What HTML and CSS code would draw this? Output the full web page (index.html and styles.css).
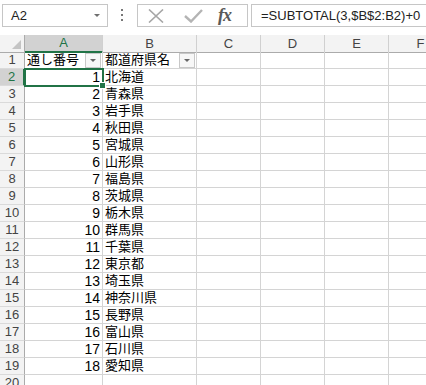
FILE: index.html
```html
<!DOCTYPE html>
<html lang="ja">
<head>
    <meta charset="UTF-8">
    <title>Sheet1</title>
    <link rel="stylesheet" href="styles.css">
</head>
<body>
    <div class="formula-bar">
        <div class="name-box"><span>A2</span><span class="nb-arrow"></span></div>
        <div class="fb-dots">
            <svg width="3" height="13" viewBox="0 0 3 13"><rect x="0" y="0" width="2" height="2" fill="#777"/><rect x="0" y="5" width="2" height="2" fill="#777"/><rect x="0" y="10" width="2" height="2" fill="#777"/></svg>
        </div>
        <div class="fb-buttons">
            <svg class="fb-cancel" width="16" height="14" viewBox="0 0 16 14"><path d="M1 0.5 L15 13.5 M15 0.5 L1 13.5" stroke="#a6a6a6" stroke-width="1.6" fill="none"/></svg>
            <svg class="fb-enter" width="19" height="14" viewBox="0 0 19 14"><path d="M1 7 L7 12.5 L18 1" stroke="#b4b4b4" stroke-width="2.4" fill="none"/></svg>
            <span class="fx">fx</span>
        </div>
        <div class="fb-input">=SUBTOTAL(3,$B$2:B2)+0</div>
    </div>

    <div class="sheet">
        <div class="row head">
            <div class="corner"><span class="corner-tri"></span></div>
            <div class="col-h sel">A</div>
            <div class="col-h">B</div>
            <div class="col-h">C</div>
            <div class="col-h">D</div>
            <div class="col-h">E</div>
            <div class="col-h">F</div>
        </div>
        <div class="row">
            <div class="row-h">1</div>
            <div class="cell text">通し番号<span class="filter-btn"></span></div>
            <div class="cell text">都道府県名<span class="filter-btn"></span></div>
            <div class="cell"></div><div class="cell"></div><div class="cell"></div><div class="cell"></div>
        </div>
        <div class="row">
            <div class="row-h sel">2</div>
            <div class="cell num">1</div><div class="cell text">北海道</div>
            <div class="cell"></div><div class="cell"></div><div class="cell"></div><div class="cell"></div>
        </div>
        <div class="row">
            <div class="row-h">3</div>
            <div class="cell num">2</div><div class="cell text">青森県</div>
            <div class="cell"></div><div class="cell"></div><div class="cell"></div><div class="cell"></div>
        </div>
        <div class="row">
            <div class="row-h">4</div>
            <div class="cell num">3</div><div class="cell text">岩手県</div>
            <div class="cell"></div><div class="cell"></div><div class="cell"></div><div class="cell"></div>
        </div>
        <div class="row">
            <div class="row-h">5</div>
            <div class="cell num">4</div><div class="cell text">秋田県</div>
            <div class="cell"></div><div class="cell"></div><div class="cell"></div><div class="cell"></div>
        </div>
        <div class="row">
            <div class="row-h">6</div>
            <div class="cell num">5</div><div class="cell text">宮城県</div>
            <div class="cell"></div><div class="cell"></div><div class="cell"></div><div class="cell"></div>
        </div>
        <div class="row">
            <div class="row-h">7</div>
            <div class="cell num">6</div><div class="cell text">山形県</div>
            <div class="cell"></div><div class="cell"></div><div class="cell"></div><div class="cell"></div>
        </div>
        <div class="row">
            <div class="row-h">8</div>
            <div class="cell num">7</div><div class="cell text">福島県</div>
            <div class="cell"></div><div class="cell"></div><div class="cell"></div><div class="cell"></div>
        </div>
        <div class="row">
            <div class="row-h">9</div>
            <div class="cell num">8</div><div class="cell text">茨城県</div>
            <div class="cell"></div><div class="cell"></div><div class="cell"></div><div class="cell"></div>
        </div>
        <div class="row">
            <div class="row-h">10</div>
            <div class="cell num">9</div><div class="cell text">栃木県</div>
            <div class="cell"></div><div class="cell"></div><div class="cell"></div><div class="cell"></div>
        </div>
        <div class="row">
            <div class="row-h">11</div>
            <div class="cell num">10</div><div class="cell text">群馬県</div>
            <div class="cell"></div><div class="cell"></div><div class="cell"></div><div class="cell"></div>
        </div>
        <div class="row">
            <div class="row-h">12</div>
            <div class="cell num">11</div><div class="cell text">千葉県</div>
            <div class="cell"></div><div class="cell"></div><div class="cell"></div><div class="cell"></div>
        </div>
        <div class="row">
            <div class="row-h">13</div>
            <div class="cell num">12</div><div class="cell text">東京都</div>
            <div class="cell"></div><div class="cell"></div><div class="cell"></div><div class="cell"></div>
        </div>
        <div class="row">
            <div class="row-h">14</div>
            <div class="cell num">13</div><div class="cell text">埼玉県</div>
            <div class="cell"></div><div class="cell"></div><div class="cell"></div><div class="cell"></div>
        </div>
        <div class="row">
            <div class="row-h">15</div>
            <div class="cell num">14</div><div class="cell text">神奈川県</div>
            <div class="cell"></div><div class="cell"></div><div class="cell"></div><div class="cell"></div>
        </div>
        <div class="row">
            <div class="row-h">16</div>
            <div class="cell num">15</div><div class="cell text">長野県</div>
            <div class="cell"></div><div class="cell"></div><div class="cell"></div><div class="cell"></div>
        </div>
        <div class="row">
            <div class="row-h">17</div>
            <div class="cell num">16</div><div class="cell text">富山県</div>
            <div class="cell"></div><div class="cell"></div><div class="cell"></div><div class="cell"></div>
        </div>
        <div class="row">
            <div class="row-h">18</div>
            <div class="cell num">17</div><div class="cell text">石川県</div>
            <div class="cell"></div><div class="cell"></div><div class="cell"></div><div class="cell"></div>
        </div>
        <div class="row">
            <div class="row-h">19</div>
            <div class="cell num">18</div><div class="cell text">愛知県</div>
            <div class="cell"></div><div class="cell"></div><div class="cell"></div><div class="cell"></div>
        </div>
        <div class="row">
            <div class="row-h">20</div>
            <div class="cell"></div><div class="cell"></div>
            <div class="cell"></div><div class="cell"></div><div class="cell"></div><div class="cell"></div>
        </div>

        <div class="selection"><span class="fill-handle"></span></div>
    </div>
</body>
</html>
```

FILE: styles.css
```css
body {
    margin: 0;
    width: 426px;
    height: 385px;
    overflow: hidden;
    background: #fff;
    font-family: "Liberation Sans", "Noto Sans CJK JP", sans-serif;
    color: #000;
}

/* formula bar */
.formula-bar {
    display: flex;
    align-items: flex-start;
    height: 35px;
    padding-top: 4px;
    box-sizing: border-box;
    background: #fff;
}

.name-box {
    display: flex;
    align-items: center;
    justify-content: space-between;
    margin-left: 2px;
    width: 106px;
    height: 23px;
    padding: 0 7px 0 8px;
    box-sizing: border-box;
    border: 1px solid #c6c6c6;
    font-size: 13px;
    color: #222;
}

.nb-arrow {
    width: 0;
    height: 0;
    border-left: 3px solid transparent;
    border-right: 3px solid transparent;
    border-top: 3px solid #6f6f6f;
}

.fb-dots {
    display: flex;
    justify-content: center;
    width: 29px;
    padding-top: 5px;
}

.fb-buttons {
    display: flex;
    align-items: center;
    width: 111px;
    height: 23px;
    padding-left: 10px;
    box-sizing: border-box;
    border: 1px solid #c6c6c6;
}

.fb-enter {
    margin-left: 20px;
}

.fx {
    margin-left: 15px;
    font-family: "Liberation Serif", serif;
    font-style: italic;
    font-weight: bold;
    font-size: 18px;
    color: #595959;
    letter-spacing: -1px;
}

.fb-input {
    flex: 1;
    height: 23px;
    margin-left: 3px;
    padding-left: 9px;
    box-sizing: border-box;
    border: 1px solid #c6c6c6;
    border-right: none;
    font-size: 13px;
    line-height: 21px;
    color: #222;
    white-space: nowrap;
}

/* grid */
.sheet {
    position: relative;
}

.row {
    display: grid;
    grid-template-columns: 25px 78px 94px 64px 64px 64px 64px;
    height: 17px;
}

.row > div {
    box-sizing: border-box;
    border-right: 1px solid #d4d4d4;
    border-bottom: 1px solid #d4d4d4;
}

.head > div {
    background: #f3f3f3;
    border-bottom-color: #ababab;
    border-right-color: #d0d0d0;
}

.corner {
    position: relative;
}

.row .corner {
    border-right-color: #ababab;
}

.corner-tri {
    position: absolute;
    right: 3px;
    bottom: 3px;
    width: 0;
    height: 0;
    border-left: 9px solid transparent;
    border-bottom: 9px solid #c4c4c4;
}

.col-h {
    text-align: center;
    font-size: 13px;
    line-height: 17px;
    color: #444;
}

.col-h.sel {
    background: #d2d2d2;
    color: #217346;
    border-bottom: 2px solid #217346;
    line-height: 16px;
}

.row .row-h {
    background: #f3f3f3;
    border-right-color: #ababab;
    border-bottom-color: #dadada;
    text-align: center;
    font-size: 13px;
    line-height: 16px;
    color: #444;
}

.row .row-h.sel {
    background: #d2d2d2;
    color: #217346;
    border-right: 2px solid #217346;
}

.cell {
    font-size: 13px;
    line-height: 16px;
    white-space: nowrap;
}

.cell.text {
    display: flex;
    justify-content: space-between;
    align-items: center;
    padding-left: 2px;
}

.cell.num {
    text-align: right;
    padding-right: 2px;
    font-size: 14px;
}

.filter-btn {
    position: relative;
    width: 16px;
    height: 15px;
    margin-right: 1px;
    box-sizing: border-box;
    border: 1px solid #c8c8c8;
    background: #f7f7f7;
}

.filter-btn::after {
    content: "";
    position: absolute;
    left: 4px;
    top: 5px;
    border-left: 3px solid transparent;
    border-right: 3px solid transparent;
    border-top: 3px solid #666;
}

/* active cell */
.selection {
    position: absolute;
    left: 24px;
    top: 33px;
    width: 80px;
    height: 19px;
    box-sizing: border-box;
    border: 2px solid #217346;
}

.fill-handle {
    position: absolute;
    right: -4px;
    bottom: -4px;
    width: 5px;
    height: 5px;
    background: #217346;
    border: 1px solid #fff;
}
```
